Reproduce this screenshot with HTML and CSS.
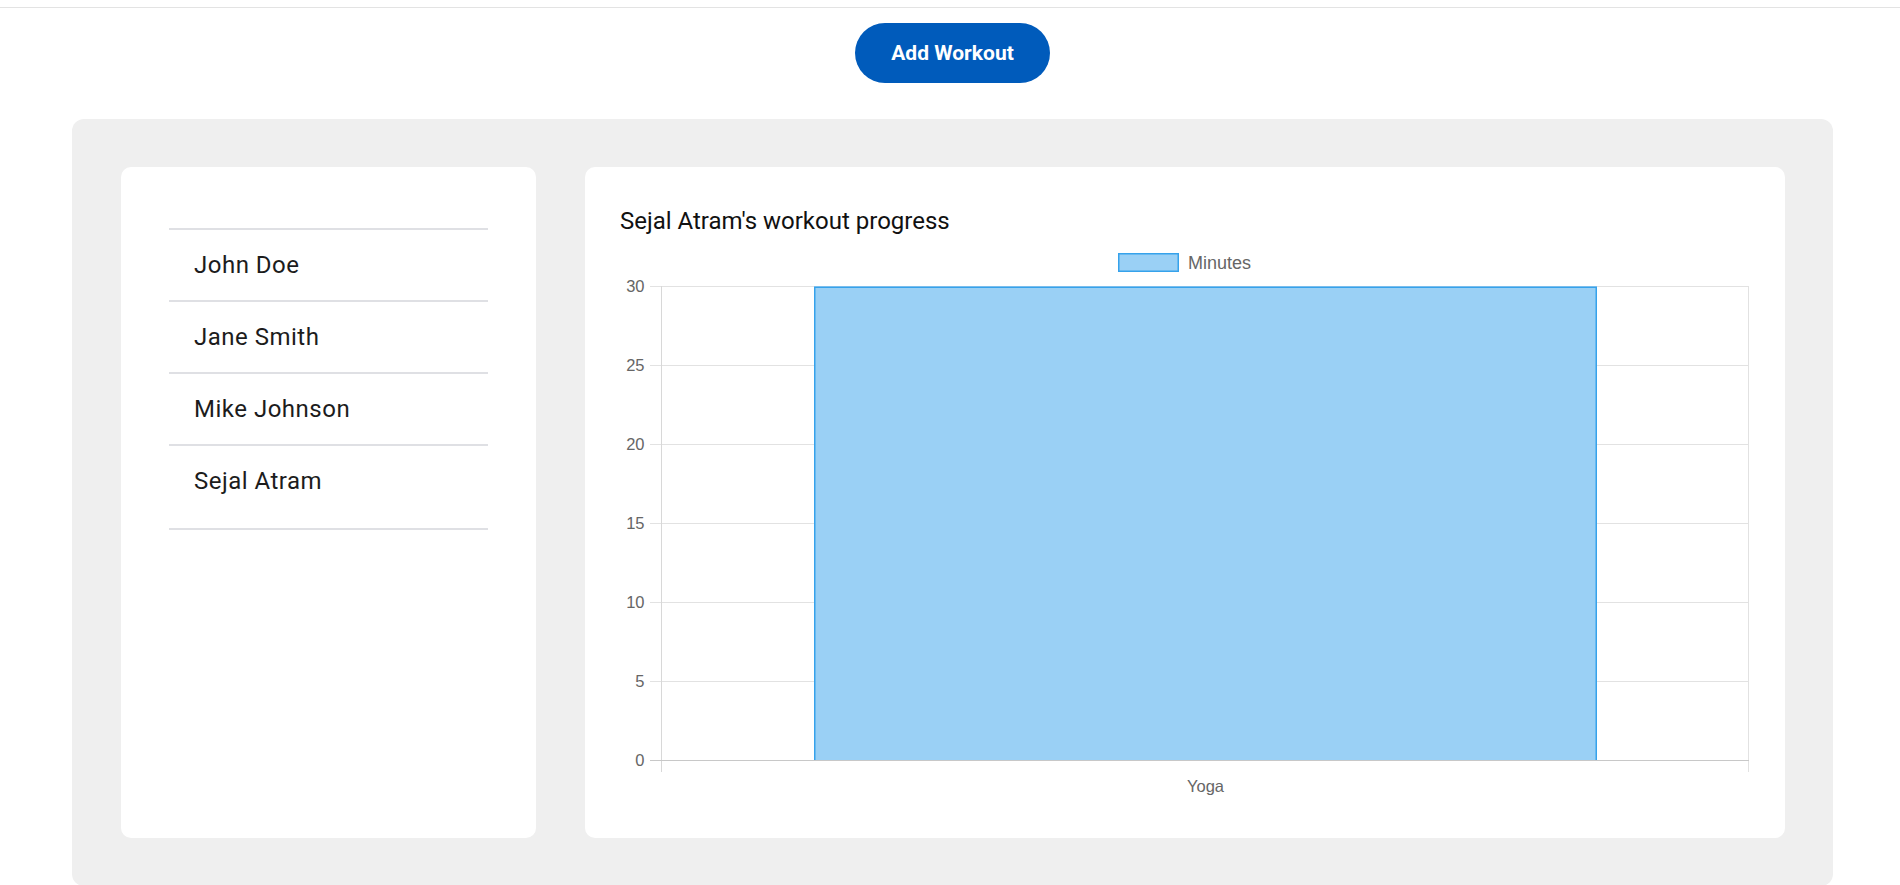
FILE: index.html
```html
<!DOCTYPE html>
<html lang="en">
<head>
<meta charset="utf-8">
<title>Workout Tracker</title>
<link rel="stylesheet" href="styles.css">
</head>
<body>
<div class="topbar"></div>
<div class="actions">
  <button class="add-btn" type="button">Add Workout</button>
</div>
<main class="panel">
  <section class="card users">
    <ul class="user-list">
      <li class="user-item">John Doe</li>
      <li class="user-item">Jane Smith</li>
      <li class="user-item">Mike Johnson</li>
      <li class="user-item">Sejal Atram</li>
    </ul>
  </section>
  <section class="card chart-card">
    <h2 class="chart-title">Sejal Atram's workout progress</h2>
    <svg class="chart" width="1129" height="564" viewBox="0 0 1129 564" xmlns="http://www.w3.org/2000/svg">
      <g class="legend">
        <rect x="498.75" y="15.75" width="59.5" height="17.5" fill="#9ad0f5" stroke="#36a2eb" stroke-width="1.5"/>
        <text x="568" y="30.5" class="legend-text">Minutes</text>
      </g>
      <g stroke="#e2e2e2" stroke-width="1">
        <line x1="30" y1="48.5" x2="1129" y2="48.5"/>
        <line x1="30" y1="127.5" x2="1129" y2="127.5"/>
        <line x1="30" y1="206.5" x2="1129" y2="206.5"/>
        <line x1="30" y1="285.5" x2="1129" y2="285.5"/>
        <line x1="30" y1="364.5" x2="1129" y2="364.5"/>
        <line x1="30" y1="443.5" x2="1129" y2="443.5"/>
        <line x1="1128.5" y1="48" x2="1128.5" y2="534"/>
      </g>
      <line x1="41.5" y1="48" x2="41.5" y2="534" stroke="#d8d8d8" stroke-width="1"/>
      <rect x="194" y="48.5" width="783" height="474" fill="#9ad0f5"/>
      <path d="M194.75 522.5 V49.25 H976.25 V522.5" fill="none" stroke="#36a2eb" stroke-width="1.5"/>
      <line x1="30" y1="522.5" x2="1129" y2="522.5" stroke="#c8c8c8" stroke-width="1"/>
      <g class="tick-text" text-anchor="end">
        <text x="24.5" y="54">30</text>
        <text x="24.5" y="133">25</text>
        <text x="24.5" y="212">20</text>
        <text x="24.5" y="291">15</text>
        <text x="24.5" y="370">10</text>
        <text x="24.5" y="449">5</text>
        <text x="24.5" y="528">0</text>
      </g>
      <text x="585.5" y="553.7" class="tick-text" text-anchor="middle">Yoga</text>
    </svg>
  </section>
</main>
</body>
</html>
```
FILE: styles.css
```css
* {
  box-sizing: border-box;
}

html, body {
  margin: 0;
  padding: 0;
  background: #ffffff;
  font-family: Roboto, "Liberation Sans", Arial, sans-serif;
}

body {
  overflow: hidden;
}

.topbar {
  height: 8px;
  border-bottom: 1px solid #e3e3e3;
}

.actions {
  display: flex;
  justify-content: center;
  margin: 0 67px 0 72px;
  padding-top: 15px;
}

.add-btn {
  width: 195px;
  height: 60px;
  border: none;
  border-radius: 30px;
  background: #005bbb;
  color: #ffffff;
  font-family: Roboto, "Liberation Sans", Arial, sans-serif;
  font-size: 21px;
  font-weight: 700;
  cursor: pointer;
}

.panel {
  margin: 36px 67px 0 72px;
  padding: 48px 48px 48px 49px;
  background: #efefef;
  border-radius: 12px;
  display: grid;
  grid-template-columns: 415px 1fr;
  gap: 49px;
}

.card {
  background: #ffffff;
  border-radius: 10px;
}

.users {
  padding: 61px 48px 48px;
}

.user-list {
  list-style: none;
  margin: 0;
  padding: 0 0 12px;
  border-bottom: 2px solid #dfe0e4;
}

.user-item {
  height: 72px;
  border-top: 2px solid #dfe0e4;
  padding: 0 25px;
  display: flex;
  align-items: center;
  font-size: 24px;
  letter-spacing: 0.5px;
  color: #1c1c1c;
}

.chart-card {
  padding: 40px 36px 36px 35px;
}

.chart-title {
  margin: 0 0 3px;
  font-size: 24px;
  line-height: 28px;
  font-weight: 400;
  color: #111111;
}

.chart {
  display: block;
}

.legend-text {
  font-family: "Liberation Sans", Arial, sans-serif;
  font-size: 18px;
  fill: #666666;
}

.tick-text {
  font-family: "Liberation Sans", Arial, sans-serif;
  font-size: 16.5px;
  fill: #666666;
}
```
